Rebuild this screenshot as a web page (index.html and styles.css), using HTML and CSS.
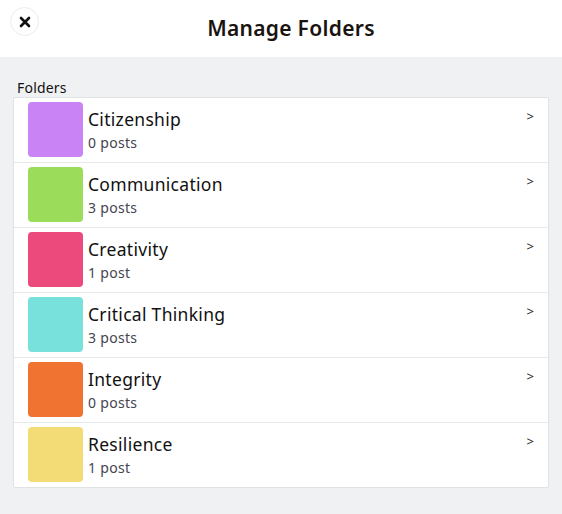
FILE: index.html
```html
<!DOCTYPE html>
<html>
<head>
<meta charset="utf-8">
<link rel="stylesheet" href="styles.css">
</head>
<body>
<div class="page">
  <header class="header">
    <button class="close" aria-label="Close">
      <svg width="12" height="12" viewBox="0 0 12 12"><path d="M2 2 L10 10 M10 2 L2 10" stroke="#111" stroke-width="2.6" stroke-linecap="round"/></svg>
    </button>
    <h1 class="title">Manage Folders</h1>
  </header>
  <main class="content">
    <div class="label">Folders</div>
    <ul class="list">
      <li class="row"><span class="swatch purple"></span><div class="info"><div class="name">Citizenship</div><div class="count">0 posts</div></div><span class="chev">&gt;</span></li>
      <li class="row"><span class="swatch green"></span><div class="info"><div class="name">Communication</div><div class="count">3 posts</div></div><span class="chev">&gt;</span></li>
      <li class="row"><span class="swatch pink"></span><div class="info"><div class="name">Creativity</div><div class="count">1 post</div></div><span class="chev">&gt;</span></li>
      <li class="row"><span class="swatch teal"></span><div class="info"><div class="name">Critical Thinking</div><div class="count">3 posts</div></div><span class="chev">&gt;</span></li>
      <li class="row"><span class="swatch orange"></span><div class="info"><div class="name">Integrity</div><div class="count">0 posts</div></div><span class="chev">&gt;</span></li>
      <li class="row"><span class="swatch yellow"></span><div class="info"><div class="name">Resilience</div><div class="count">1 post</div></div><span class="chev">&gt;</span></li>
    </ul>
  </main>
</div>
</body>
</html>
```
FILE: styles.css
```css
html, body {
  margin: 0;
  padding: 0;
  height: 100%;
}
body {
  font-family: "Noto Sans", "Lato", sans-serif;
  color: #1b1b1b;
  background: #f0f1f3;
}
.page {
  min-height: 100%;
  display: flex;
  flex-direction: column;
}
.header {
  height: 57px;
  background: #fff;
  display: flex;
  align-items: center;
  justify-content: center;
  position: relative;
}
.close {
  position: absolute;
  left: 10px;
  top: 7px;
  width: 29px;
  height: 29px;
  border-radius: 50%;
  border: 1px solid #ececec;
  background: #fff;
  padding: 0;
  display: flex;
  align-items: center;
  justify-content: center;
}
.title {
  margin: 0 0 2px 20px;
  font-size: 21px;
  line-height: 28px;
  font-weight: 600;
  color: #1a1410;
  letter-spacing: 0.3px;
}
.content {
  padding: 21px 13px 20px 13px;
}
.label {
  font-size: 14px;
  padding-left: 4px;
  height: 19px;
  line-height: 19px;
  color: #111;
  letter-spacing: 0.2px;
}
.list {
  list-style: none;
  margin: 0;
  padding: 0;
  background: #fff;
  border: 1px solid #e1e2e4;
  border-radius: 2px;
}
.row {
  display: flex;
  align-items: flex-start;
  padding: 4px 14px 0 14px;
  box-sizing: border-box;
  border-bottom: 1px solid #e8e9eb;
  height: 65px;
}
.row:last-child {
  border-bottom: none;
  height: 64px;
}
.swatch {
  width: 55px;
  height: 55px;
  border-radius: 4px;
  flex: none;
}
.purple { background: #c983f4; }
.green { background: #9bdd5b; }
.pink { background: #ec4a7c; }
.teal { background: #78e1db; }
.orange { background: #f07332; }
.yellow { background: #f3dc75; }
.info {
  flex: 1;
  padding-left: 5px;
  padding-top: 6px;
}
.name {
  font-size: 17.5px;
  line-height: 22px;
  color: #111;
  letter-spacing: 0.3px;
}
.count {
  font-size: 14px;
  line-height: 18px;
  margin-top: 4px;
  color: #45454f;
  letter-spacing: 0.3px;
}
.chev {
  font-size: 13px;
  line-height: 16px;
  color: #222;
  margin-top: 6px;
  margin-right: 0;
}
```
